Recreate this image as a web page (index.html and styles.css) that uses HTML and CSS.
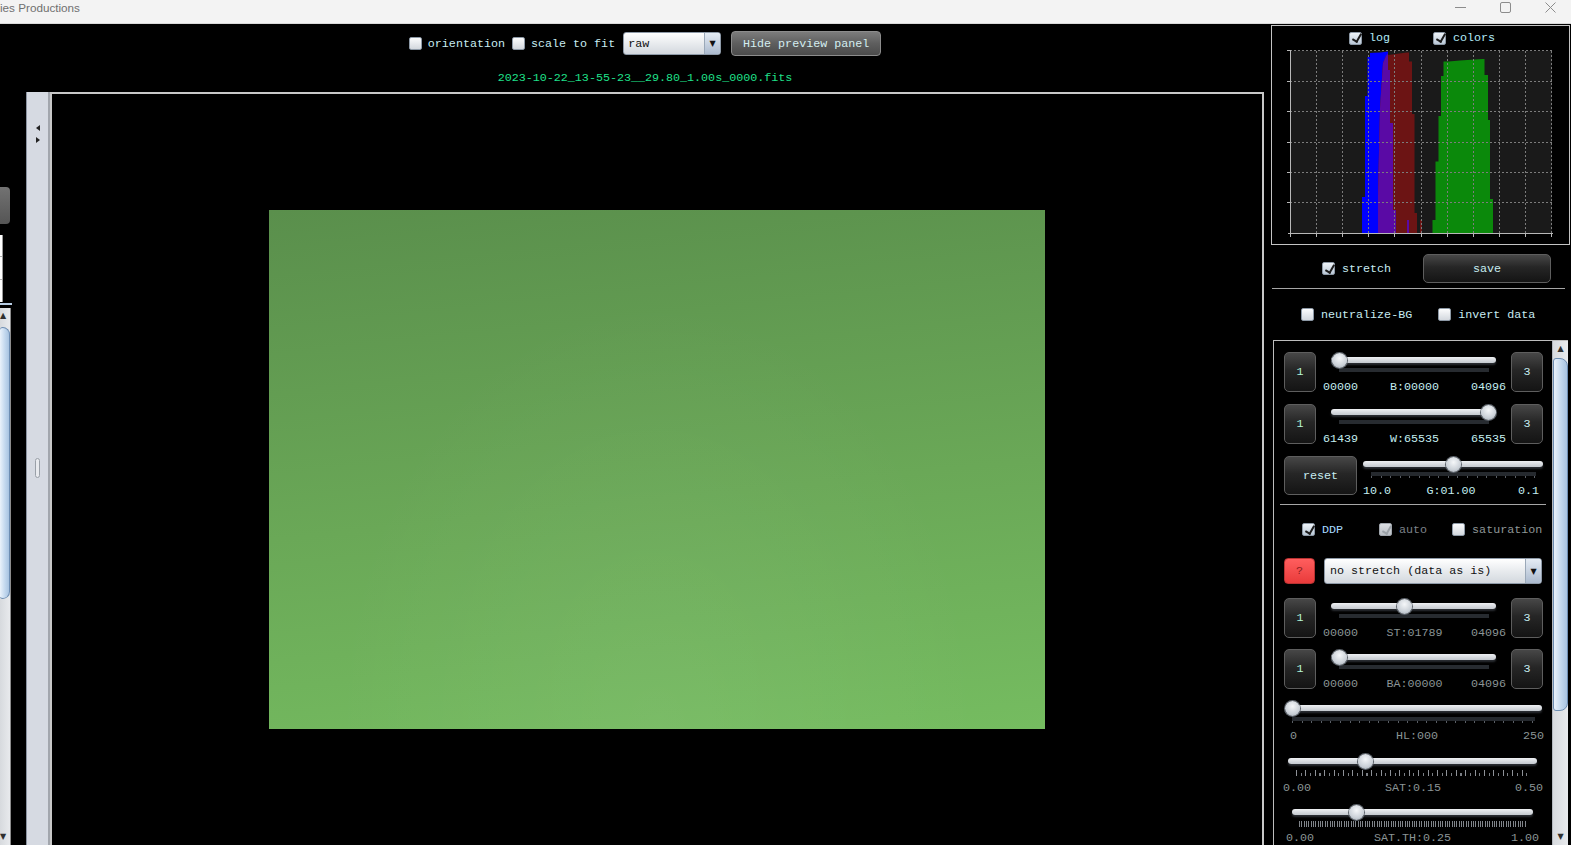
FILE: index.html
```html
<!DOCTYPE html>
<html lang="en">
<head>
  <meta charset="UTF-8" />
  <title>FITS preview</title>
  <link rel="stylesheet" href="styles.css">
</head>
<body>
  <div class="titlebar">
    <span class="title">ies Productions</span>
    <div class="winctl">
      <svg width="11" height="11" viewBox="0 0 11 11"><path d="M0 5.5h11" stroke="#8c8c8c"/></svg>
      <svg width="11" height="11" viewBox="0 0 11 11"><rect x="0.5" y="0.5" width="10" height="10" rx="1.5" fill="none" stroke="#8c8c8c"/></svg>
      <svg width="11" height="11" viewBox="0 0 11 11"><path d="M0.5 0.5l10 10M10.5 0.5l-10 10" stroke="#8c8c8c"/></svg>
    </div>
  </div>

  <div class="main">
    <!-- cut-off left panel -->
    <div class="lstrip">
      <div class="ls-btn"></div>
      <div class="ls-table"></div>
      <div class="ls-line"></div>
      <div class="vscroll ls-scroll">
        <div class="sb-arrow">&#9650;</div>
        <div class="sb-thumb"></div>
        <div class="sb-track"></div>
        <div class="sb-arrow">&#9660;</div>
      </div>
    </div>

    <!-- preview -->
    <div class="center">
      <div class="toolbar">
        <div class="tools">
          <label class="chk"><span class="cb"></span>orientation</label>
          <label class="chk"><span class="cb"></span>scale to fit</label>
          <div class="select sel-raw"><span class="sel-text">raw</span><span class="sel-arrow">&#9660;</span></div>
          <button class="gbtn">Hide preview panel</button>
        </div>
        <div class="fname">2023-10-22_13-55-23__29.80_1.00s_0000.fits</div>
      </div>
      <div class="viewer">
        <div class="splitter">
          <span class="arr-l"></span>
          <span class="arr-r"></span>
          <span class="grip"></span>
        </div>
        <div class="frame">
          <div class="photo"></div>
        </div>
      </div>
    </div>

    <!-- right panel -->
    <div class="rpanel">
      <div class="histo">
        <div class="histo-checks">
          <label class="chk hc"><span class="cb on"></span>log</label>
          <label class="chk hc"><span class="cb on"></span>colors</label>
        </div>
        <svg width="270" height="190" viewBox="1284 48 270 190">
          <rect x="1290" y="50.5" width="262" height="183" fill="#1a1a1a"/>
          <polygon fill="#0000ff" points="1362,233.5 1362,197 1365,197 1365,96 1367.5,96 1367.5,57 1370,57 1370,53 1380,52.5 1388,51.5 1388,233.5"/>
          <polygon fill="#6c1414" points="1378,233.5 1378,195 1380,108 1383,63 1386,56 1388,55 1407,52.5 1409,52.5 1409,61.5 1412,61.5 1412,114 1414.5,114 1414.5,213 1417,213 1417,233.5"/>
          <polygon fill="#5a0aa5" points="1378,233.5 1378,195 1380,108 1383,63 1386,56 1388,53 1388,70 1390,70 1390,123 1393,123 1393,210 1396,210 1396,233.5"/>
          <rect x="1407" y="220" width="2" height="13.5" fill="#5a0aa5"/>
          <rect x="1420" y="220" width="2" height="13.5" fill="#6c1414"/>
          <polygon fill="#0b890b" points="1432.5,233.5 1432.5,220 1435.5,220 1435.5,161.5 1438.5,161.5 1438.5,116 1441,116 1441,76 1443.5,76 1443.5,61.5 1448.5,61.5 1460,60.5 1482,59 1484.5,59 1484.5,75 1488,75 1488,120 1490,120 1490,199 1493,199 1493,233.5"/>
          <path d="M1316.5 51V233M1342.5 51V233M1368.5 51V233M1394.5 51V233M1421.5 51V233M1447.5 51V233M1473.5 51V233M1499.5 51V233M1525.5 51V233M1551.5 51V233M1290 50.5H1552M1290 81.5H1552M1290 111.5H1552M1290 142.5H1552M1290 172.5H1552M1290 202.5H1552" stroke="#7c7c7c" stroke-dasharray="2 2" fill="none"/>
          <path d="M1290.5 50V234M1288 233.5H1553M1290.5 234v3M1316.5 234v3M1342.5 234v3M1368.5 234v3M1394.5 234v3M1421.5 234v3M1447.5 234v3M1473.5 234v3M1499.5 234v3M1525.5 234v3M1551.5 234v3M1287 50.5h3M1287 81.5h3M1287 111.5h3M1287 142.5h3M1287 172.5h3M1287 202.5h3" stroke="#b8b8b8" fill="none"/>
        </svg>
      </div>

      <div class="stretch-row">
        <label class="chk"><span class="cb on"></span>stretch</label>
        <button class="dbtn save">save</button>
      </div>
      <div class="sep"></div>
      <div class="opt-row">
        <label class="chk"><span class="cb"></span>neutralize-BG</label>
        <label class="chk"><span class="cb"></span>invert data</label>
      </div>

      <div class="spanel">
        <div class="sp-content">
          <div class="srow">
            <button class="dbtn one">1</button>
            <div class="slider rs">
              <div class="track"><span class="thumb" style="--p:0"></span></div>
              <div class="scale"></div>
              <div class="vals"><span>00000</span><span>B:00000</span><span>04096</span></div>
            </div>
            <button class="dbtn three">3</button>
          </div>
          <div class="srow">
            <button class="dbtn one">1</button>
            <div class="slider rs">
              <div class="track"><span class="thumb" style="--p:1"></span></div>
              <div class="scale"></div>
              <div class="vals"><span>61439</span><span>W:65535</span><span>65535</span></div>
            </div>
            <button class="dbtn three">3</button>
          </div>
          <div class="srow grow">
            <button class="dbtn reset">reset</button>
            <div class="slider gs">
              <div class="track"><span class="thumb" style="--p:0.5"></span></div>
              <div class="scale ticks"></div>
              <div class="vals"><span>10.0</span><span>G:01.00</span><span>0.1</span></div>
            </div>
          </div>
          <div class="sep2"></div>

          <div class="ddp-row">
            <label class="chk ddp"><span class="cb on"></span>DDP</label>
            <label class="chk auto"><span class="cb on dis"></span>auto</label>
            <label class="chk satur"><span class="cb"></span>saturation</label>
          </div>

          <div class="q-row">
            <button class="qbtn">?</button>
            <div class="select sel-mode"><span class="sel-text">no stretch (data as is)</span><span class="sel-arrow">&#9660;</span></div>
          </div>

          <div class="srow st">
            <button class="dbtn one">1</button>
            <div class="slider rs">
              <div class="track"><span class="thumb" style="--p:0.44"></span></div>
              <div class="scale"></div>
              <div class="vals dim"><span>00000</span><span>ST:01789</span><span>04096</span></div>
            </div>
            <button class="dbtn three">3</button>
          </div>
          <div class="srow ba">
            <button class="dbtn one">1</button>
            <div class="slider rs">
              <div class="track"><span class="thumb" style="--p:0"></span></div>
              <div class="scale"></div>
              <div class="vals dim"><span>00000</span><span>BA:00000</span><span>04096</span></div>
            </div>
            <button class="dbtn three">3</button>
          </div>

          <div class="slider fs hl">
            <div class="track"><span class="thumb" style="--p:0"></span></div>
            <div class="scale ticks"></div>
            <div class="vals dim"><span>0</span><span>HL:000</span><span>250</span></div>
          </div>
          <div class="slider fs sat">
            <div class="track"><span class="thumb" style="--p:0.3"></span></div>
            <div class="scale lticks"></div>
            <div class="vals dim"><span>0.00</span><span>SAT:0.15</span><span>0.50</span></div>
          </div>
          <div class="slider fs satth">
            <div class="track"><span class="thumb" style="--p:0.25"></span></div>
            <div class="scale dticks"></div>
            <div class="vals dim"><span>0.00</span><span>SAT.TH:0.25</span><span>1.00</span></div>
          </div>
        </div>
        <div class="vscroll sp-scroll">
          <div class="sb-arrow">&#9650;</div>
          <div class="sb-thumb"></div>
          <div class="sb-track"></div>
          <div class="sb-arrow">&#9660;</div>
        </div>
      </div>
    </div>
  </div>
</body>
</html>
```

FILE: styles.css
```css
/* Base */
body {
  margin: 0;
  width: 1571px;
  height: 845px;
  overflow: hidden;
  background: #000;
  font-family: 'Liberation Mono', 'DejaVu Sans Mono', monospace;
  font-size: 11.7px;
  color: #c8eef2;
  display: flex;
  flex-direction: column;
}
button {
  font: inherit;
  padding: 0;
  cursor: pointer;
}

/* Window title bar */
.titlebar {
  flex: none;
  height: 23px;
  background: #f3f3f3;
  border-bottom: 1px solid #dadada;
  display: flex;
  justify-content: space-between;
}
.title {
  font-family: 'Liberation Sans', Arial, sans-serif;
  font-size: 11.7px;
  line-height: 16px;
  color: #707070;
}
.winctl {
  display: flex;
  gap: 34px;
  margin: 2px 15px 0 0;
}
.winctl svg { display: block; }

.main {
  flex: 1;
  display: flex;
  min-height: 0;
}

/* Left, cut-off panel */
.lstrip {
  flex: none;
  width: 12px;
  display: flex;
  flex-direction: column;
}
.ls-btn {
  margin-top: 163px;
  width: 10px;
  height: 37px;
  background: linear-gradient(#727272, #555);
  border-radius: 0 4px 4px 0;
}
.ls-table {
  margin-top: 11px;
  width: 2px;
  height: 67px;
  background: linear-gradient(transparent 21px, #b0b0b0 21px 22px, transparent 22px 44px, #b0b0b0 44px 45px, transparent 45px), #fff;
  border-right: 1px solid #9a9a9a;
}
.ls-line {
  margin-top: 1px;
  width: 12px;
  height: 2px;
  background: #b8cde4;
}

/* Scrollbars */
.vscroll {
  display: flex;
  flex-direction: column;
  background: linear-gradient(90deg, #d7dade, #e8eaed);
}
.ls-scroll {
  margin-top: 3px;
  width: 10px;
  flex: 1;
  border-right: 1px solid #8c8c8c;
}
.sb-arrow {
  flex: none;
  height: 16px;
  line-height: 16px;
  font-family: 'DejaVu Sans', sans-serif;
  font-size: 8px;
  text-align: center;
  color: #303030;
}
.ls-scroll .sb-arrow { text-align: left; }
.sb-thumb {
  flex: none;
  background: linear-gradient(90deg, #eaf2fb, #c3d8ee 55%, #a8c3e1);
  border: 1px solid #6d8db2;
  border-radius: 3px 8px 8px 3px;
}
.ls-scroll .sb-thumb {
  margin-top: 3px;
  height: 270px;
  border-left: none;
}
.sb-track { flex: 1; }

/* Centre: preview */
.center {
  flex: 1;
  min-width: 0;
  margin-left: 14px;
  display: flex;
  flex-direction: column;
}
.toolbar {
  flex: none;
  height: 68px;
  box-sizing: border-box;
  padding-top: 7px;
  display: flex;
  flex-direction: column;
  align-items: center;
}
.tools {
  display: flex;
  align-items: center;
  height: 25px;
}
.fname {
  margin-top: 15px;
  line-height: 14px;
  color: #1fe08a;
}

/* Checkboxes */
.chk {
  display: flex;
  align-items: center;
  gap: 6px;
  line-height: 14px;
  white-space: nowrap;
  color: #c8ecf2;
}
.tools .chk + .chk { margin-left: 7px; }
.cb {
  flex: none;
  position: relative;
  width: 13px;
  height: 13px;
  box-sizing: border-box;
  border: 1px solid #8d99a6;
  border-radius: 2px;
  background: linear-gradient(#fbfcfd, #d3d8de);
}
.cb.on { background: linear-gradient(#eef3f8, #b9c7d6); }
.cb.on::after {
  content: '';
  position: absolute;
  left: 3.5px;
  top: -0.5px;
  width: 3.5px;
  height: 8px;
  border: solid #1c1c1c;
  border-width: 0 2px 2px 0;
  transform: rotate(30deg);
}
.cb.dis { background: linear-gradient(#dcdfe3, #b9bec4); border-color: #a0a6ad; }
.cb.dis::after { border-color: #9ba1a7; }

/* Select boxes */
.select {
  display: flex;
  box-sizing: border-box;
  border: 1px solid #8e9aa8;
  border-radius: 3px;
  background: linear-gradient(#fff, #e8ebee 50%, #d3d8de);
  color: #111;
  overflow: hidden;
}
.sel-text {
  flex: 1;
  padding-left: 5px;
  line-height: 25px;
  white-space: nowrap;
}
.sel-arrow {
  flex: none;
  width: 15px;
  border-left: 1px solid #9aa8b8;
  background: linear-gradient(#e5ecf4, #abbace);
  font-family: 'DejaVu Sans', sans-serif;
  font-size: 8px;
  display: flex;
  align-items: center;
  justify-content: center;
  color: #111;
}
.sel-raw {
  margin-left: 8px;
  width: 98px;
  height: 23px;
}
.sel-raw .sel-text { padding-left: 4px; line-height: 23px; }

.gbtn {
  margin-left: 10px;
  width: 150px;
  height: 25px;
  background: linear-gradient(#7c7c7c, #5e5e5e 50%, #4b4b4b);
  border: 1px solid #8c8c8c;
  border-radius: 4px;
  color: #d4eef0;
}

/* Viewer */
.viewer {
  flex: 1;
  display: flex;
  min-height: 0;
}
.splitter {
  flex: none;
  width: 24px;
  box-sizing: border-box;
  border-left: 1px solid #8b93a1;
  border-right: 2px solid #a2a6ad;
  background: #d6dae2;
  display: flex;
  flex-direction: column;
  align-items: center;
}
.arr-l, .arr-r {
  width: 0;
  height: 0;
  border-top: 3px solid transparent;
  border-bottom: 3px solid transparent;
}
.arr-l { margin-top: 33px; border-right: 4px solid #222; }
.arr-r { margin-top: 6px; border-left: 4px solid #222; }
.grip {
  margin-top: 315px;
  width: 3px;
  height: 18px;
  border: 1px solid #9aa0a8;
  border-radius: 3px;
  background: #e8eaee;
}
.frame {
  flex: 1;
  border: 2px solid #c8c8c8;
  border-bottom: none;
  display: flex;
  align-items: center;
  justify-content: center;
}
.photo {
  width: 776px;
  height: 519px;
  background:
    radial-gradient(ellipse at 50% 100%, rgba(255,255,255,0.05), transparent 60%),
    linear-gradient(174deg, #5a8f4c, #6aa857 55%, #75bc60);
}

/* Right panel */
.rpanel {
  flex: none;
  width: 307px;
  display: flex;
  flex-direction: column;
}
.histo {
  flex: none;
  margin: 1px 1px 0 7px;
  height: 220px;
  box-sizing: border-box;
  border: 1px solid #c4c4c4;
}
.histo-checks {
  display: flex;
  padding: 5px 0 0 77px;
}
.hc { gap: 7px; color: #b2eaf6; }
.hc + .hc { margin-left: 43px; }
.histo svg {
  display: block;
  margin: 3px 0 0 12px;
}

.stretch-row {
  flex: none;
  display: flex;
  align-items: center;
  height: 29px;
  margin-top: 9px;
  padding-left: 58px;
}
.stretch-row .chk { gap: 7px; }
.dbtn {
  background: linear-gradient(#474747, #262626 45%, #141414);
  border: 1px solid #5e5e5e;
  border-radius: 5px;
  color: #c8eef2;
}
.save {
  margin-left: auto;
  margin-right: 20px;
  width: 128px;
  height: 29px;
}
.sep {
  flex: none;
  height: 1px;
  margin: 5px 6px 0 8px;
  background: #a6a6a6;
}
.opt-row {
  flex: none;
  display: flex;
  align-items: center;
  height: 13px;
  margin-top: 19px;
  padding-left: 37px;
}
.opt-row .chk { gap: 7px; }
.opt-row .chk + .chk { margin-left: 26px; }

/* Scrolling settings panel */
.spanel {
  flex: 1;
  min-height: 0;
  margin: 19px 3px 0 9px;
  border-top: 1px solid #bdbdbd;
  border-left: 1px solid #bdbdbd;
  display: flex;
}
.sp-content {
  flex: 1;
  min-width: 0;
  box-sizing: border-box;
  padding: 11px 9px 0 10px;
  display: flex;
  flex-direction: column;
}
.sp-scroll {
  flex: none;
  width: 15px;
  border-left: 1px solid #b5b9bf;
}
.sp-scroll .sb-thumb {
  margin-top: 1px;
  height: 351px;
}

.srow {
  flex: none;
  display: flex;
  gap: 4px;
  height: 40px;
}
.srow + .srow { margin-top: 12px; }
.srow.grow { gap: 6px; height: 39px; }
.srow.st { margin-top: 14px; }
.srow.ba { margin-top: 11px; }
.one, .three { flex: none; width: 32px; }
.one { color: #b4f6d8; }
.reset { flex: none; width: 73px; }

.sep2 {
  flex: none;
  height: 1px;
  margin: 9px -3px 0 -4px;
  background: #a6a6a6;
}
.ddp-row {
  flex: none;
  display: flex;
  align-items: center;
  height: 13px;
  margin-top: 18px;
  padding-left: 18px;
}
.ddp-row .chk { gap: 7px; }
.ddp { color: #a8daff; }
.auto { margin-left: 36px; color: #7c8289; }
.satur { margin-left: 25px; color: #8e9697; }

.q-row {
  flex: none;
  display: flex;
  gap: 9px;
  height: 26px;
  margin-top: 22px;
}
.qbtn {
  flex: none;
  width: 31px;
  background: linear-gradient(#ff5e5e, #e93b3b);
  border: 1px solid #b93232;
  border-radius: 4px;
  color: #8a1f1f;
}
.sel-mode { flex: 1; margin-right: 1px; }

/* Sliders */
.slider {
  --o: 8px;
  flex: 1;
  min-width: 0;
}
.track {
  position: relative;
  height: 6px;
  margin-top: 5px;
  border-radius: 3px;
  background: linear-gradient(#eef0f3, #c3c8ce);
  box-shadow: 0 2px 2px #2b2e33;
}
.thumb {
  position: absolute;
  top: 50%;
  left: calc(var(--o) + var(--p) * (100% - 2 * var(--o)));
  width: 15px;
  height: 15px;
  margin: -7.5px 0 0 -7.5px;
  border-radius: 50%;
  background: radial-gradient(circle at 50% 35%, #f5f7f9, #cbd1d8 60%, #9ba4ae);
  box-shadow: 0 0 0 1px #5d646c;
}
.scale {
  height: 4px;
  margin-top: 5px;
  background: #272b30;
}
.vals {
  display: grid;
  grid-template-columns: 1fr auto 1fr;
  margin-top: 8px;
  line-height: 14px;
  white-space: nowrap;
  color: #c4eef0;
}
.vals span:last-child { text-align: right; }
.vals.dim { color: #8a9495; }

.rs .track { margin: 5px 11px 0; }
.rs .scale { margin: 5px 18px 0 19px; }
.rs .vals { padding: 0 1px 0 3px; }

.gs .scale { margin: 5px 7px 0 8px; }
.gs .vals { margin-top: 6px; padding-right: 4px; }

.scale.ticks {
  height: 6px;
  background:
    repeating-linear-gradient(90deg, #5a5f66 0 1px, transparent 1px 9.6px) 0 100% / 100% 2px no-repeat,
    linear-gradient(#25292e, #25292e) 0 0 / 100% 4px no-repeat;
}
.scale.lticks {
  height: 6px;
  background:
    repeating-linear-gradient(90deg, #8e9298 0 1px, transparent 1px 9.4px) 0 0 / 100% 6px no-repeat,
    repeating-linear-gradient(90deg, transparent 0 4.7px, #7a7e84 4.7px 5.7px, transparent 5.7px 9.4px) 0 100% / 100% 3px no-repeat;
}
.scale.dticks {
  height: 6px;
  background: repeating-linear-gradient(90deg, #80848a 0 1px, transparent 1px 2.35px);
}

.fs { flex: none; margin-top: 15px; }
.fs .track { margin-top: 0; }
.fs .scale { margin-top: 6px; }
.fs .vals { margin-top: 5px; }
.hl { --o: 5.5px; margin-top: 16px; }
.hl .track { margin: 0 1px 0 3px; }
.hl .scale { margin: 6px 8px 0 8px; }
.hl .vals { margin: 6px -1px 0 6px; }
.sat .track { margin: 0 6px 0 4px; }
.sat .scale { margin: 6px 12px 0 12px; }
.sat .vals { margin: 5px 0 0 -1px; }
.satth { margin-top: 14px; }
.satth .track { margin: 0 10px 0 8px; }
.satth .scale { margin: 6px 16px 0 15px; }
.satth .vals { margin: 5px 4px 0 2px; line-height: 12px; }
```
